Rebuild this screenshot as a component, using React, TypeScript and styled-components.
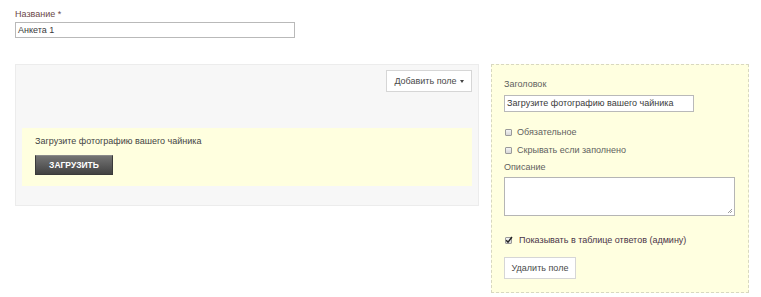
import React from 'react';
import styled, { createGlobalStyle } from 'styled-components';

const GlobalStyle = createGlobalStyle`
  html, body {
    margin: 0;
    padding: 0;
    background: #ffffff;
  }
  body {
    font-family: "Liberation Sans", Arial, sans-serif;
    font-size: 9px;
    color: #5f5f5f;
  }
`;

const Page = styled.div`
  padding: 8px 0 0 15px;
  width: 761px;
  height: 297px;
  box-sizing: border-box;
  overflow: hidden;
`;

const NameLabel = styled.div`
  color: #6b4747;
  font-size: 9px;
  line-height: 12px;
  margin-bottom: 2px;
`;

const TextInput = styled.div<{ $width: number; $height?: number }>`
  width: ${p => p.$width}px;
  height: ${p => p.$height ?? 16}px;
  box-sizing: border-box;
  border: 1px solid #b9b9b9;
  background: #ffffff;
  color: #3a3a3a;
  font-size: 9px;
  line-height: ${p => (p.$height ?? 16) - 2}px;
  padding: 0 2px;
  white-space: nowrap;
`;

const Columns = styled.div`
  display: flex;
  align-items: flex-start;
  gap: 12px;
  margin-top: 26px;
`;

const Editor = styled.div`
  width: 464px;
  height: 142px;
  flex-shrink: 0;
  box-sizing: border-box;
  background: #f7f7f7;
  border: 1px solid #ececec;
  padding: 5px 6px 0 6px;
  display: flex;
  flex-direction: column;
`;

const EditorTop = styled.div`
  display: flex;
  justify-content: flex-end;
`;

const WhiteButton = styled.div<{ $width: number }>`
  width: ${p => p.$width}px;
  height: 22px;
  box-sizing: border-box;
  background: #ffffff;
  border: 1px solid #d6d6d6;
  color: #4a4a4a;
  font-size: 9px;
  display: flex;
  align-items: center;
  justify-content: center;
  gap: 3px;
`;

const Caret = styled.span`
  width: 0;
  height: 0;
  border-left: 2.5px solid transparent;
  border-right: 2.5px solid transparent;
  border-top: 3px solid #444444;
  margin-top: 1px;
`;

const FieldPreview = styled.div`
  margin-top: 36px;
  height: 58px;
  box-sizing: border-box;
  background: #ffffdf;
  padding: 8px 13px 0 13px;
`;

const PreviewTitle = styled.div`
  color: #444444;
  font-size: 9px;
  line-height: 11px;
`;

const UploadButton = styled.div`
  margin-top: 8px;
  width: 78px;
  height: 20px;
  box-sizing: border-box;
  background: linear-gradient(#747474, #424242);
  border: 1px solid #3a3a3a;
  border-top-color: #8a8a8a;
  color: #ffffff;
  font-weight: bold;
  font-size: 8.5px;
  display: flex;
  align-items: center;
  justify-content: center;
`;

const Settings = styled.div`
  width: 258px;
  height: 229px;
  flex-shrink: 0;
  box-sizing: border-box;
  background: #ffffe0;
  border: 1px dashed #d8d8c0;
  padding: 14px 12px 0 12px;
  display: flex;
  flex-direction: column;
`;

const FieldLabel = styled.div<{ $gap?: number }>`
  color: #5f5f5f;
  font-size: 9px;
  line-height: 11px;
  margin-top: ${p => p.$gap ?? 0}px;
`;

const Spaced = styled.div<{ $gap: number }>`
  margin-top: ${p => p.$gap}px;
`;

const CheckRow = styled.div<{ $gap: number; $accent?: boolean }>`
  display: flex;
  align-items: center;
  gap: 5px;
  margin-top: ${p => p.$gap}px;
  color: ${p => (p.$accent ? '#4a3348' : '#5f5f5f')};
  font-size: 9px;
  line-height: 11px;
`;

const Box = styled.span`
  width: 7px;
  height: 7px;
  box-sizing: border-box;
  border: 1px solid #9a9a9a;
  border-radius: 1px;
  background: linear-gradient(#f4f4f4, #d8d8d8);
  position: relative;
  margin-left: 1px;
  flex-shrink: 0;
`;

const TextArea = styled.div`
  margin-top: 4px;
  width: 231px;
  height: 39px;
  box-sizing: border-box;
  background: #ffffff;
  border: 1px solid #b5b5b5;
  position: relative;
`;

const Grip = styled.svg`
  position: absolute;
  right: 1px;
  bottom: 1px;
`;

const Tick = styled.svg`
  position: absolute;
  left: -1px;
  top: -2px;
`;

export default function App() {
  return (
    <>
      <GlobalStyle />
      <Page>
        <NameLabel>Название *</NameLabel>
        <TextInput $width={280}>Анкета 1</TextInput>
        <Columns>
          <Editor>
            <EditorTop>
              <WhiteButton $width={86}>
                Добавить поле <Caret />
              </WhiteButton>
            </EditorTop>
            <FieldPreview>
              <PreviewTitle>Загрузите фотографию вашего чайника</PreviewTitle>
              <UploadButton>ЗАГРУЗИТЬ</UploadButton>
            </FieldPreview>
          </Editor>
          <Settings>
            <FieldLabel>Заголовок</FieldLabel>
            <Spaced $gap={5}>
              <TextInput $width={190} $height={17}>Загрузите фотографию вашего чайника</TextInput>
            </Spaced>
            <CheckRow $gap={15}>
              <Box />
              Обязательное
            </CheckRow>
            <CheckRow $gap={7}>
              <Box />
              Скрывать если заполнено
            </CheckRow>
            <FieldLabel $gap={6}>Описание</FieldLabel>
            <TextArea>
              <Grip width="6" height="6" viewBox="0 0 6 6">
                <path d="M5 1 L1 5 M5 3 L3 5" stroke="#888" strokeWidth="0.8" />
              </Grip>
            </TextArea>
            <CheckRow $gap={19} $accent>
              <Box>
                <Tick width="8" height="8" viewBox="0 0 8 8">
                  <path d="M1.2 4.2 L3 6.2 L7 1" stroke="#222" strokeWidth="1.4" fill="none" />
                </Tick>
              </Box>
              <span style={{ marginLeft: 2 }}>Показывать в таблице ответов (админу)</span>
            </CheckRow>
            <Spaced $gap={11}>
              <WhiteButton $width={72}>Удалить поле</WhiteButton>
            </Spaced>
          </Settings>
        </Columns>
      </Page>
    </>
  );
}
